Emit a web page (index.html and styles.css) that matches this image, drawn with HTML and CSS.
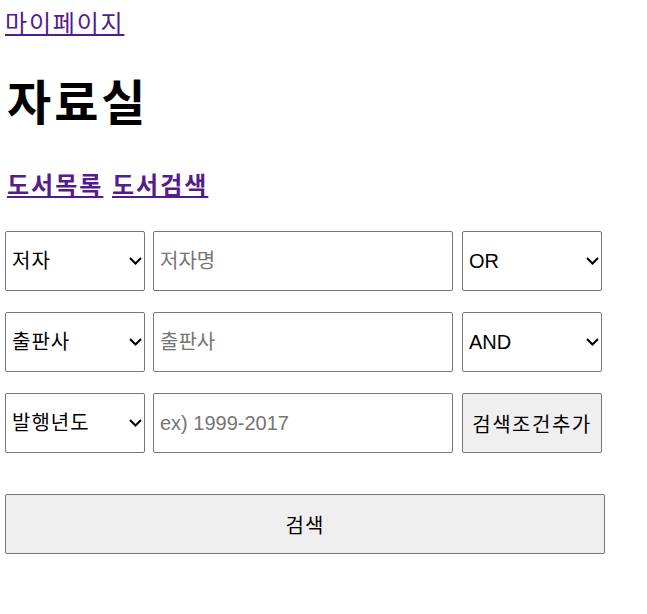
FILE: index.html
```html
<!DOCTYPE html>
<html lang="ko">
<head>
<meta charset="utf-8">
<title>자료실</title>
<link rel="stylesheet" href="styles.css">
</head>
<body>
<a href="#" class="mypage">마이페이지</a>
<h1 class="title">자료실</h1>
<h3 class="tabs"><a href="#" class="tab">도서목록</a> <a href="#" class="tab">도서검색</a></h3>
<form class="search">
  <div class="row">
    <select class="field"><option>저자</option><option>출판사</option><option>발행년도</option></select>
    <input class="query" type="text" placeholder="저자명">
    <select class="op"><option>OR</option><option>AND</option></select>
  </div>
  <div class="row">
    <select class="field"><option>출판사</option><option>저자</option><option>발행년도</option></select>
    <input class="query" type="text" placeholder="출판사">
    <select class="op"><option>AND</option><option>OR</option></select>
  </div>
  <div class="row">
    <select class="field"><option>발행년도</option><option>저자</option><option>출판사</option></select>
    <input class="query" type="text" placeholder="ex) 1999-2017">
    <button type="button" class="add">검색조건추가</button>
  </div>
  <button type="submit" class="submit">검색</button>
</form>
</body>
</html>
```

FILE: styles.css
```css
body {
  margin: 5px;
  font-family: "Liberation Sans", "Noto Sans CJK KR", sans-serif;
  color: #000;
  background: #fff;
}
a { color: #551A8B; }
.mypage {
  display: inline-block;
  font-size: 24px;
  line-height: 30px;
  letter-spacing: 1.8px;
  margin-top: 4px;
}
.title {
  font-size: 48px;
  line-height: 56px;
  letter-spacing: 3px;
  margin: 37px 0 0 2px;
}
.tabs {
  font-size: 24px;
  line-height: 30px;
  letter-spacing: 2px;
  margin: 39px 0 0 2px;
}
.search {
  margin-top: 30px;
  display: flex;
  flex-direction: column;
  gap: 21px;
}
.row {
  display: flex;
  align-items: center;
}
.field, .query, .op, .add, .submit {
  font-family: "Liberation Sans", "Noto Sans CJK KR", sans-serif;
  font-size: 20px;
  height: 60px;
  box-sizing: border-box;
  border: 1px solid #767676;
  border-radius: 2px;
  color: #000;
}
.field, .op {
  -webkit-appearance: none;
  appearance: none;
  width: 140px;
  padding: 0 18px 0 6px;
  background: #fff url("data:image/svg+xml;utf8,<svg xmlns='http://www.w3.org/2000/svg' width='13' height='8' viewBox='0 0 13 8'><path d='M1 1 L6.5 6.5 L12 1' fill='none' stroke='black' stroke-width='2'/></svg>") no-repeat right 2px center;
}
.field {
  letter-spacing: 1px;
}
.query {
  width: 300px;
  margin-left: 8px;
  padding: 0 6px;
}
.query::placeholder { color: #757575; }
.op, .add {
  margin-left: 9px;
}
.add {
  width: 140px;
  background: #efefef;
  padding: 0;
  letter-spacing: 1.5px;
}
.submit {
  width: 600px;
  margin-top: 20px;
  background: #efefef;
  letter-spacing: 1px;
}
```
